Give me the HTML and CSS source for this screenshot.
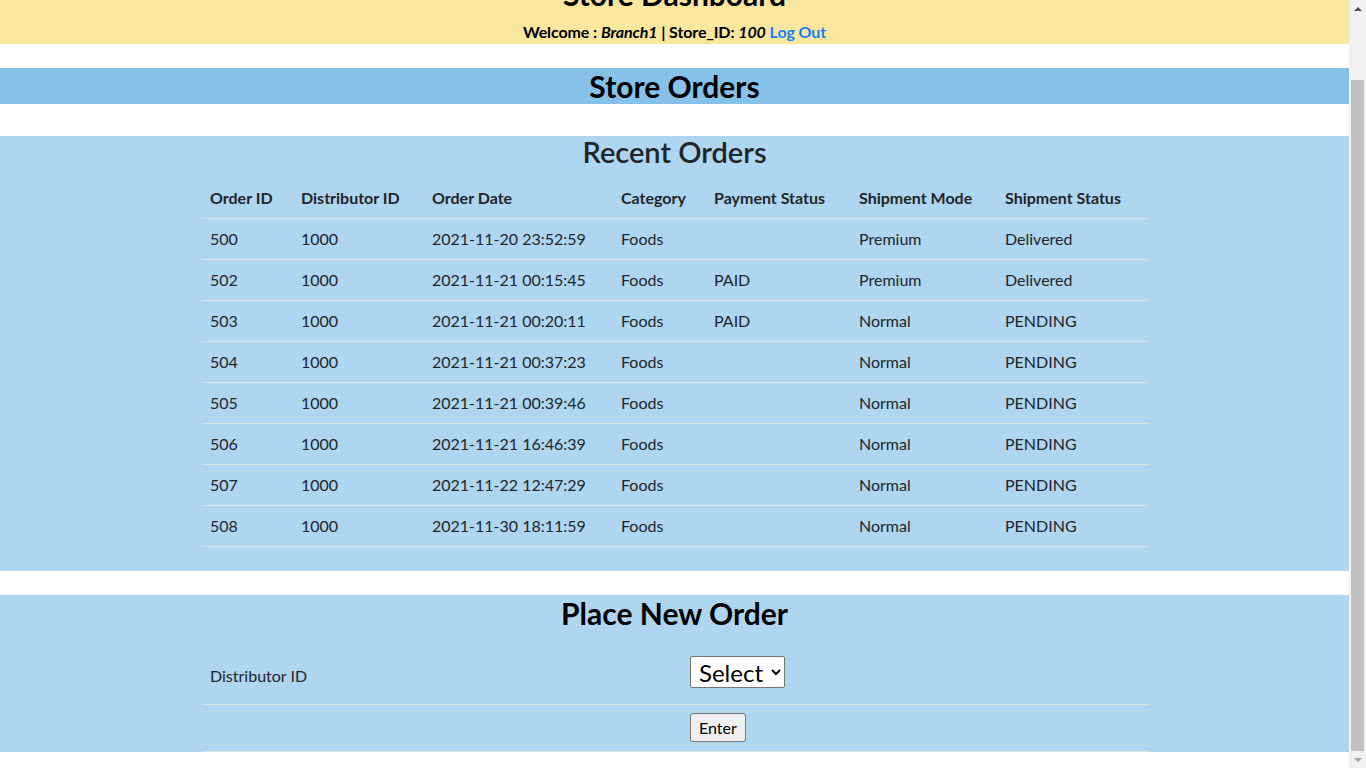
FILE: index.html
```html
<!DOCTYPE html>
<html lang="en">
<head>
<meta charset="utf-8">
<title>Store Dashboard</title>
<link rel="stylesheet" href="styles.css">
</head>
<body>
<div class="page">
<header class="top">
  <h1 class="top-title">Store Dashboard</h1>
  <p class="welcome">Welcome : <i>Branch1</i> | Store_ID: <i>100</i> <a href="#" class="logout">Log Out</a></p>
</header>

<h2 class="bar-title">Store Orders</h2>

<section class="panel recent">
  <h2 class="panel-title">Recent Orders</h2>
  <table class="orders">
    <colgroup>
      <col class="c1"><col class="c2"><col class="c3"><col class="c4"><col class="c5"><col class="c6"><col class="c7">
    </colgroup>
    <thead>
      <tr><th>Order ID</th><th>Distributor ID</th><th>Order Date</th><th>Category</th><th>Payment Status</th><th>Shipment Mode</th><th>Shipment Status</th></tr>
    </thead>
    <tbody>
      <tr><td>500</td><td>1000</td><td>2021-11-20 23:52:59</td><td>Foods</td><td></td><td>Premium</td><td>Delivered</td></tr>
      <tr><td>502</td><td>1000</td><td>2021-11-21 00:15:45</td><td>Foods</td><td>PAID</td><td>Premium</td><td>Delivered</td></tr>
      <tr><td>503</td><td>1000</td><td>2021-11-21 00:20:11</td><td>Foods</td><td>PAID</td><td>Normal</td><td>PENDING</td></tr>
      <tr><td>504</td><td>1000</td><td>2021-11-21 00:37:23</td><td>Foods</td><td></td><td>Normal</td><td>PENDING</td></tr>
      <tr><td>505</td><td>1000</td><td>2021-11-21 00:39:46</td><td>Foods</td><td></td><td>Normal</td><td>PENDING</td></tr>
      <tr><td>506</td><td>1000</td><td>2021-11-21 16:46:39</td><td>Foods</td><td></td><td>Normal</td><td>PENDING</td></tr>
      <tr><td>507</td><td>1000</td><td>2021-11-22 12:47:29</td><td>Foods</td><td></td><td>Normal</td><td>PENDING</td></tr>
      <tr><td>508</td><td>1000</td><td>2021-11-30 18:11:59</td><td>Foods</td><td></td><td>Normal</td><td>PENDING</td></tr>
    </tbody>
  </table>
</section>

<section class="panel neworder">
  <h2 class="panel-title strong">Place New Order</h2>
  <form class="order-form" action="#">
    <table class="form-table">
      <colgroup><col class="f1"><col class="f2"></colgroup>
      <tbody>
        <tr class="row-select">
          <td>Distributor ID</td>
          <td><select class="dist-select"><option>Select</option><option>1000</option></select></td>
        </tr>
        <tr class="row-submit">
          <td></td>
          <td><button type="button" class="enter-btn">Enter</button></td>
        </tr>
      </tbody>
    </table>
  </form>
</section>
</div>

<div class="fake-scrollbar" aria-hidden="true">
  <span class="sb-arrow sb-up"></span>
  <span class="sb-thumb"></span>
  <span class="sb-arrow sb-down"></span>
</div>
<script src="script.js"></script>
</body>
</html>
```

FILE: styles.css
```css
html, body {
  margin: 0;
  padding: 0;
}
body {
  font-family: Lato, "Open Sans", "Liberation Sans", sans-serif;
  font-size: 16px;
  line-height: 1.5;
  color: #212529;
  background: #ffffff;
}
.page {
  margin-right: 17px;
  padding-bottom: 16px;
}
.top {
  background: #f9e79f;
  text-align: center;
  padding: 50px 0 1px;
  color: #000;
}
.top-title {
  margin: 0;
  font-size: 30px;
  font-weight: 700;
  line-height: 34px;
}
.welcome {
  margin: 10px 0 0;
  font-size: 16px;
  line-height: 22px;
  font-weight: 700;
  letter-spacing: -0.1px;
}
.welcome i {
  font-style: italic;
}
.logout {
  color: #1a7ef5;
  text-decoration: none;
}
.bar-title {
  margin: 24px 0 32px;
  background: #85c1e9;
  color: #000;
  text-align: center;
  font-size: 30px;
  font-weight: 700;
  line-height: 36px;
}
.panel {
  background: #aed6f1;
}
.recent {
  padding-top: 1px;
  padding-bottom: 24px;
  margin-bottom: 24px;
}
.panel-title {
  margin: 0 0 11px;
  text-align: center;
  font-size: 29px;
  font-weight: 600;
  line-height: 30px;
  color: #212529;
}
.neworder {
  padding-top: 1px;
}
.panel-title.strong {
  font-size: 30px;
  font-weight: 700;
  color: #000;
  line-height: 34px;
  margin-bottom: 18px;
}
.orders, .form-table {
  width: 945px;
  margin: 0 auto;
  border-collapse: collapse;
  table-layout: fixed;
}
.c1 { width: 91px; }
.c2 { width: 131px; }
.c3 { width: 189px; }
.c4 { width: 93px; }
.c5 { width: 145px; }
.c6 { width: 146px; }
.c7 { width: 150px; }
.orders th, .orders td {
  text-align: left;
  padding: 8px;
  border-bottom: 1px solid #dee2e6;
  vertical-align: top;
  white-space: nowrap;
}
.orders th {
  font-weight: 700;
}
.order-form {
  margin: 0;
}
.f1 { width: 480px; }
.f2 { width: 465px; }
.form-table td {
  padding: 8px;
  border-bottom: 1px solid #dee2e6;
  text-align: left;
}
.row-select td {
  vertical-align: baseline;
  padding-bottom: 16px;
}
.row-submit td {
  vertical-align: top;
  padding-bottom: 9px;
}
.dist-select {
  font-family: Lato, "Open Sans", "Liberation Sans", sans-serif;
  font-size: 24px;
  height: 32px;
  padding: 0 4px;
  color: #000;
  background: #fff;
  border: 1px solid #767676;
  border-radius: 2px;
}
.enter-btn {
  display: inline-block;
  vertical-align: top;
  font-family: Lato, "Open Sans", "Liberation Sans", sans-serif;
  font-size: 16px;
  line-height: 25px;
  height: 29px;
  padding: 0 8px;
  color: #000;
  background: #efefef;
  border: 1px solid #767676;
  border-radius: 3px;
}

/* simulated browser scrollbar (screenshot shows the page scrolled to the bottom) */
.fake-scrollbar {
  position: fixed;
  top: 0;
  right: 0;
  width: 17px;
  height: 100vh;
  background: #f1f1f1;
  display: flex;
  flex-direction: column;
  align-items: center;
}
.sb-arrow {
  flex: 0 0 17px;
  width: 17px;
  display: flex;
  align-items: center;
  justify-content: center;
}
.sb-arrow::before {
  content: "";
  width: 0;
  height: 0;
  border-left: 4px solid transparent;
  border-right: 4px solid transparent;
}
.sb-up::before {
  border-bottom: 4px solid #505050;
}
.sb-down::before {
  border-top: 4px solid #a3a3a3;
}
.sb-thumb {
  width: 13px;
  height: 671px;
  margin-top: 63px;
  margin-bottom: auto;
  background: #c1c1c1;
}
```

FILE: script.js
```js
function toBottom() {
  window.scrollTo(0, document.documentElement.scrollHeight);
}
toBottom();
window.addEventListener('load', toBottom);
```
